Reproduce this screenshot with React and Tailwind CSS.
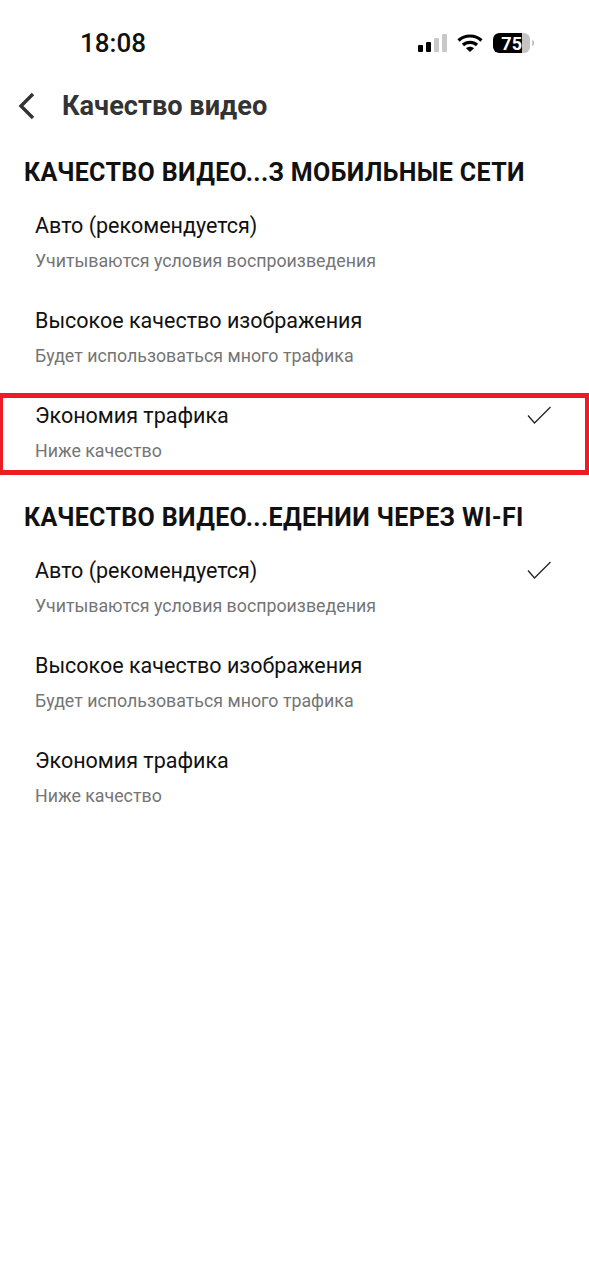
const options = [
  { title: 'Авто (рекомендуется)', sub: 'Учитываются условия воспроизведения' },
  { title: 'Высокое качество изображения', sub: 'Будет использоваться много трафика' },
  { title: 'Экономия трафика', sub: 'Ниже качество' },
];

function Check() {
  return (
    <svg width="24" height="18" viewBox="0 0 24 18" fill="none" className="absolute right-[38px] top-[20px]">
      <path d="M1 9.5L7.5 17L23.5 1" stroke="#222" strokeWidth="1.3" />
    </svg>
  );
}

function Row({ title, sub, checked, boxed }) {
  return (
    <div className="relative h-[95px] pl-[35px] pt-[16px]">
      {boxed && (
        <div className="absolute left-0 right-0 top-[7px] h-[82px] border-y-[5px] border-l-[3px] border-r-[4px] border-[#ed1c24]" />
      )}
      <div className="text-[21.5px] leading-[28px] text-[#111]">{title}</div>
      <div className="mt-[10px] text-[17.8px] leading-[22px] text-[#757575]">{sub}</div>
      {checked && <Check />}
    </div>
  );
}

function StatusBar() {
  return (
    <div className="flex h-[87px] items-start justify-between pl-[80px] pr-[55px] pt-[28px]">
      <div className="text-[26px] leading-[30px] font-medium text-[#111]">18:08</div>
      <div className="flex items-center pt-[5px]">
        <div className="flex items-end gap-[3px]">
          <div className="h-[7px] w-[5px] rounded-[1px] bg-black" />
          <div className="h-[10px] w-[5px] rounded-[1px] bg-black" />
          <div className="h-[14px] w-[5px] rounded-[1px] bg-[#c8c8c8]" />
          <div className="h-[18px] w-[5px] rounded-[1px] bg-[#c8c8c8]" />
        </div>
        <svg width="26" height="20" viewBox="0 0 26 20" fill="none" className="ml-[10px]">
          <path d="M1.5 7.5C7.8 1.5 18.2 1.5 24.5 7.5" stroke="#000" strokeWidth="3.2" />
          <path d="M6 12C9.8 8.4 16.2 8.4 20 12" stroke="#000" strokeWidth="3.2" />
          <path d="M9 15.2L13 19L17 15.2C14.8 13.2 11.2 13.2 9 15.2Z" fill="#000" />
        </svg>
        <div className="ml-[10px] flex items-center gap-[2px]">
          <div className="flex h-[20px] w-[37px] items-center overflow-hidden rounded-[6px] bg-[#c4c4c4]">
            <div className="flex h-full w-[29px] items-center justify-end rounded-l-[6px] bg-black text-[18px] font-bold text-white">
              75
            </div>
          </div>
          <div className="h-[6px] w-[2px] rounded-r-[2px] bg-[#c4c4c4]" />
        </div>
      </div>
    </div>
  );
}

export default function App() {
  return (
    <div className="h-[1280px] w-[589px] bg-white font-['Roboto',sans-serif]">
      <StatusBar />
      <div className="flex h-[38px] items-center gap-[27px] pl-[18px]">
        <svg width="17" height="28" viewBox="0 0 17 28" fill="none">
          <path d="M15 2L3 14L15 26" stroke="#333" strokeWidth="3.4" />
        </svg>
        <h1 className="text-[27.2px] font-bold leading-[38px] text-[#333]">Качество видео</h1>
      </div>
      <section className="mt-[31px]">
        <h2 className="px-[24px] text-[25px] font-bold leading-[34px] tracking-[0.35px] whitespace-nowrap text-[#111]">КАЧЕСТВО ВИДЕО...З МОБИЛЬНЫЕ СЕТИ</h2>
        <div className="mt-[6px]">
          {options.map((o, i) => (
            <Row key={i} {...o} checked={i === 2} boxed={i === 2} />
          ))}
        </div>
      </section>
      <section className="mt-[20px]">
        <h2 className="px-[24px] text-[25px] font-bold leading-[34px] tracking-[0.35px] whitespace-nowrap text-[#111]">КАЧЕСТВО ВИДЕО...ЕДЕНИИ ЧЕРЕЗ WI-FI</h2>
        <div className="mt-[6px]">
          {options.map((o, i) => (
            <Row key={i} {...o} checked={i === 0} />
          ))}
        </div>
      </section>
    </div>
  );
}
